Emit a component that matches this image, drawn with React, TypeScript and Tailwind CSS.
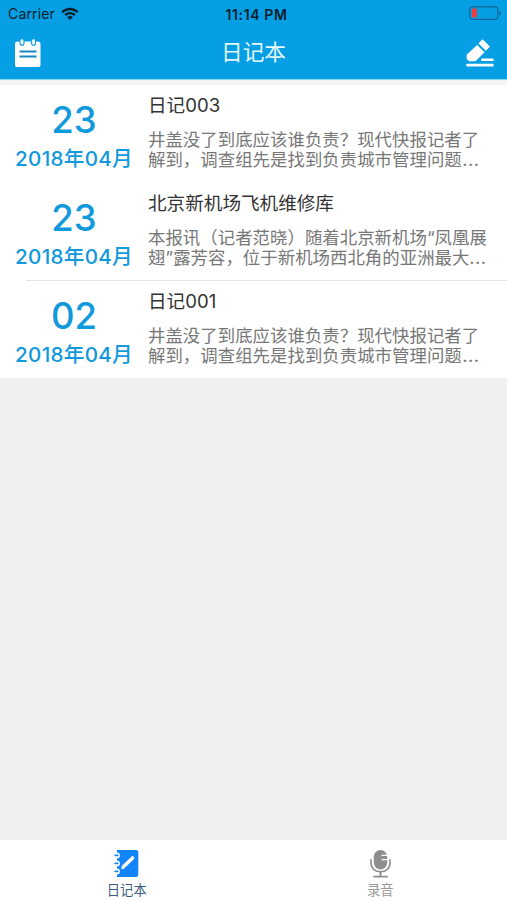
import React from 'react';

type Entry = { day: string; month: string; title: string; lines: [string, string]; divider: boolean };

const entries: Entry[] = [
  {
    day: '23',
    month: '2018年04月',
    title: '日记003',
    lines: ['井盖没了到底应该谁负责？现代快报记者了', '解到，调查组先是找到负责城市管理问题'],
    divider: false,
  },
  {
    day: '23',
    month: '2018年04月',
    title: '北京新机场飞机维修库',
    lines: ['本报讯（记者范晓）随着北京新机场“凤凰展', '翅”露芳容，位于新机场西北角的亚洲最大'],
    divider: true,
  },
  {
    day: '02',
    month: '2018年04月',
    title: '日记001',
    lines: ['井盖没了到底应该谁负责？现代快报记者了', '解到，调查组先是找到负责城市管理问题'],
    divider: false,
  },
];

function WifiIcon() {
  return (
    <svg width="18" height="14" viewBox="0 0 18 14" fill="none" stroke="#06202e" strokeWidth="2.3">
      <path d="M1.2 5.2C5.6 .9 12.4 .9 16.8 5.2" />
      <path d="M4.1 8.2C6.9 5.5 11.1 5.5 13.9 8.2" />
      <path d="M9 13 6.2 10.2C7.8 8.7 10.2 8.7 11.8 10.2Z" fill="#06202e" stroke="none" />
    </svg>
  );
}

function BatteryIcon() {
  return (
    <svg width="33" height="15" viewBox="0 0 33 15">
      <rect x=".8" y=".8" width="28" height="12.6" rx="2.8" fill="none" stroke="#0a679b" strokeWidth="1.2" />
      <rect x="2.8" y="2.6" width="5" height="9" rx="1" fill="#f23b3d" />
      <path d="M30.3 4.7C32.6 5.6 32.6 8.6 30.3 9.5Z" fill="#0a679b" />
    </svg>
  );
}

function NotepadIcon() {
  return (
    <svg width="26" height="28" viewBox="0 0 26 28">
      <rect x="0" y="2.5" width="25.5" height="25.5" rx="2.6" fill="#fff" />
      <g fill="#fff" stroke="#069fe3" strokeWidth="1.1">
        <rect x="5" y="-.2" width="4" height="6.4" rx="2" />
        <rect x="16.6" y="-.2" width="4" height="6.4" rx="2" />
      </g>
      <path d="M4.5 12.6H21.5M4.5 17.6H21.5" stroke="#1687bd" strokeWidth="2" />
    </svg>
  );
}

function ComposeIcon() {
  return (
    <svg width="28" height="28" viewBox="0 0 28 28" fill="#fff">
      <path d="M11.2 5.9 18.5 13.2 9.5 22.2H3L.7 20V15.8Z" />
      <path d="M12.5 4.4 16 .8Q16.6 .2 17.2 .8L23.4 7Q24 7.6 23.4 8.2L19.8 11.7Z" />
      <rect x="15.2" y="19.6" width="12.3" height="2.5" rx=".6" />
      <rect x=".4" y="24.7" width="27.1" height="2.7" rx=".6" />
    </svg>
  );
}

function DiaryIcon() {
  return (
    <svg width="25" height="27" viewBox="0 0 25 27">
      <path d="M3 0H22.2Q24.3 0 24.3 2.1V24.8Q24.3 26.9 22.2 26.9H3Z" fill="#1184f6" />
      <g fill="#fff">
        <circle cx="3" cy="5.4" r="2.9" />
        <circle cx="3" cy="13.4" r="2.9" />
        <circle cx="3" cy="21.4" r="2.9" />
      </g>
      <path d="M1.2 5.4H3.8M1.2 13.4H3.8M1.2 21.4H3.8" stroke="#1184f6" strokeWidth="1.6" strokeLinecap="round" />
      <path d="M9.4 16.8 18.6 7.9" stroke="#fff" strokeWidth="3.5" strokeLinecap="round" />
      <path d="M7.2 19.2 8.2 15.5 10.7 18.1Z" fill="#fff" />
    </svg>
  );
}

function MicIcon() {
  return (
    <svg width="21" height="28" viewBox="0 0 21 28" fill="none">
      <rect x="3.8" y="0" width="13.4" height="19.4" rx="6.7" fill="#8e8e8e" />
      <path d="M11.6 5.3H17.2M11.6 9.6H17.2" stroke="#fff" strokeWidth="1.2" />
      <path d="M1 9.2V12.8C1 18.2 5 21.8 10.5 21.8S20 18.2 20 12.8V9.2" stroke="#8e8e8e" strokeWidth="1.6" />
      <path d="M10.5 21.8V26.6M4 26.6H17" stroke="#8e8e8e" strokeWidth="1.9" strokeLinecap="round" />
    </svg>
  );
}

function Row({ entry }: { entry: Entry }) {
  return (
    <li className="flex h-[97.8px] flex-col bg-white">
      <div className="flex min-h-0 flex-1">
        <div className="flex w-[148px] shrink-0 flex-col items-center whitespace-nowrap font-medium text-[#1099dc]">
          <span className="mt-[15px] text-[36.5px] leading-[40px]">{entry.day}</span>
          <span className="mt-[6px] text-[20.6px] leading-[26px] tracking-[0.3px]">{entry.month}</span>
        </div>
        <div className="min-w-0 flex-1 whitespace-nowrap">
          <h2 className="mt-[7px] text-[18.6px] leading-[26px] text-[#333]">{entry.title}</h2>
          <p className="mt-[12px] text-[17.4px] leading-[20.4px] tracking-[0.04px] text-[#777]">
            {entry.lines[0]}
            <br />
            {entry.lines[1]}
            <span className="inline-block origin-left scale-x-[1.15] leading-none">…</span>
          </p>
        </div>
      </div>
      {entry.divider && <div className="ml-[26px] h-px shrink-0 bg-[#e3e3e3]" />}
    </li>
  );
}

export default function App() {
  return (
    <div className="flex h-[900px] w-[507px] flex-col overflow-hidden bg-[#f0f0f0] font-[Inter,'Noto_Sans_CJK_SC',sans-serif]">
      <header className="h-[80px] shrink-0 border-b border-[#8fd5f4] bg-[#069fe3]">
        <div className="grid h-[27px] grid-cols-3 items-center text-[14px] text-[#06202e]">
          <div className="flex items-center gap-[6px] pl-[8px]">
            <span className="tracking-[0.15px]">Carrier</span>
            <WifiIcon />
          </div>
          <span className="pl-[6px] pt-px text-center text-[14px] font-semibold tracking-[0.6px]">11:14 PM</span>
          <div className="flex justify-end pr-[5px]">
            <BatteryIcon />
          </div>
        </div>
        <div className="flex h-[51px] items-center justify-between pl-[15px] pr-[13px]">
          <NotepadIcon />
          <h1 className="pb-[2px] text-[21.7px] leading-[30px] text-[#e5f7ff]">日记本</h1>
          <ComposeIcon />
        </div>
      </header>
      <div className="h-[5px] shrink-0 bg-[#f6f5f5]" />
      <ul className="min-h-0 flex-1">
        {entries.map((entry, i) => (
          <Row key={i} entry={entry} />
        ))}
      </ul>
      <nav className="grid h-[60px] shrink-0 grid-cols-2 bg-white text-[13.3px] leading-[18px]">
        <div className="flex flex-col items-center pt-[10px] text-[#3c5c80]">
          <DiaryIcon />
          <span className="mt-[4px]">日记本</span>
        </div>
        <div className="flex flex-col items-center pt-[10px] text-[#999]">
          <MicIcon />
          <span className="mt-[3px]">录音</span>
        </div>
      </nav>
    </div>
  );
}
